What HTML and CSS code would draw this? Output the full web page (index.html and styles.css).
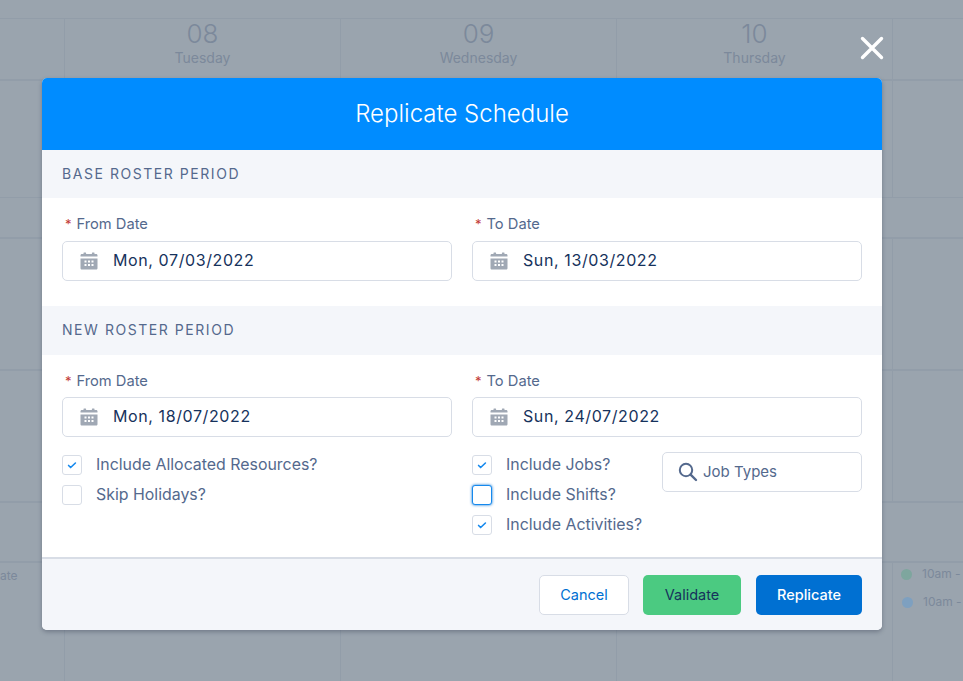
FILE: index.html
```html
<!DOCTYPE html>
<html lang="en">
<head>
<meta charset="utf-8">
<title>Replicate Schedule</title>
<link rel="stylesheet" href="styles.css">
</head>
<body>
<div class="calendar">
  <div class="cal-row cal-top"></div>
  <div class="cal-row cal-head">
    <div class="cell cell-first"></div>
    <div class="cell cell-day"><span class="day-num">08</span><span class="day-name">Tuesday</span></div>
    <div class="cell cell-day"><span class="day-num">09</span><span class="day-name">Wednesday</span></div>
    <div class="cell cell-day"><span class="day-num">10</span><span class="day-name">Thursday</span></div>
    <div class="cell cell-last"></div>
  </div>
  <div class="cal-row cal-r117">
    <div class="cell cell-first"></div><div class="cell cell-day"></div><div class="cell cell-day"></div><div class="cell cell-day"></div><div class="cell cell-last"></div>
  </div>
  <div class="cal-row cal-gap41"></div>
  <div class="cal-row cal-r132">
    <div class="cell cell-first"></div><div class="cell cell-day"></div><div class="cell cell-day"></div><div class="cell cell-day"></div><div class="cell cell-last"></div>
  </div>
  <div class="cal-row cal-r132">
    <div class="cell cell-first"></div><div class="cell cell-day"></div><div class="cell cell-day"></div><div class="cell cell-day"></div><div class="cell cell-last"></div>
  </div>
  <div class="cal-row cal-gap60"></div>
  <div class="cal-row cal-bottom">
    <div class="cell cell-first"><span class="cut-text">ate</span></div>
    <div class="cell cell-day"></div><div class="cell cell-day"></div><div class="cell cell-day"></div>
    <div class="cell cell-last cell-events">
      <div class="event"><span class="dot dot-green"></span><span>10am -</span></div>
      <div class="event event-second"><span class="dot dot-blue"></span><span>10am -</span></div>
    </div>
  </div>
</div>

<button class="close" type="button" aria-label="Close">
  <svg viewBox="0 0 24 24" width="24" height="24"><path d="M2.5 2.5 L21.5 21.5 M21.5 2.5 L2.5 21.5" stroke="#fff" stroke-width="3.4" stroke-linecap="round" fill="none"/></svg>
</button>

<section class="modal">
  <header class="modal-head"><h1>Replicate Schedule</h1></header>
  <div class="modal-body">
    <h2 class="band">Base Roster Period</h2>
    <div class="fields fields-base">
      <div class="field">
        <label class="label"><span class="req">*</span>From Date</label>
        <div class="input">
          <svg class="cal-icon" viewBox="0 0 18 18"><use href="#cal"/></svg>
          <span class="input-text">Mon, 07/03/2022</span>
        </div>
      </div>
      <div class="field">
        <label class="label"><span class="req">*</span>To Date</label>
        <div class="input">
          <svg class="cal-icon" viewBox="0 0 18 18"><use href="#cal"/></svg>
          <span class="input-text">Sun, 13/03/2022</span>
        </div>
      </div>
    </div>
    <h2 class="band band-new">New Roster Period</h2>
    <div class="fields fields-new">
      <div class="field">
        <label class="label"><span class="req">*</span>From Date</label>
        <div class="input">
          <svg class="cal-icon" viewBox="0 0 18 18"><use href="#cal"/></svg>
          <span class="input-text">Mon, 18/07/2022</span>
        </div>
      </div>
      <div class="field">
        <label class="label"><span class="req">*</span>To Date</label>
        <div class="input">
          <svg class="cal-icon" viewBox="0 0 18 18"><use href="#cal"/></svg>
          <span class="input-text">Sun, 24/07/2022</span>
        </div>
      </div>
    </div>
    <div class="options">
      <div class="checks">
        <div class="check"><span class="box"><svg viewBox="0 0 20 20"><use href="#tick"/></svg></span><span class="check-text">Include Allocated Resources?</span></div>
        <div class="check"><span class="box"></span><span class="check-text">Skip Holidays?</span></div>
      </div>
      <div class="options-right">
        <div class="checks">
          <div class="check"><span class="box"><svg viewBox="0 0 20 20"><use href="#tick"/></svg></span><span class="check-text">Include Jobs?</span></div>
          <div class="check"><span class="box box-focus"></span><span class="check-text">Include Shifts?</span></div>
          <div class="check"><span class="box"><svg viewBox="0 0 20 20"><use href="#tick"/></svg></span><span class="check-text">Include Activities?</span></div>
        </div>
        <div class="search">
          <svg class="search-icon" viewBox="0 0 20 20"><circle cx="8" cy="8" r="6.2" fill="none" stroke="#54698d" stroke-width="2"/><path d="M12.6 12.6 L18 18" stroke="#54698d" stroke-width="2.4" stroke-linecap="round"/></svg>
          <span class="search-text">Job Types</span>
        </div>
      </div>
    </div>
  </div>
  <footer class="modal-foot">
    <button class="btn btn-cancel" type="button">Cancel</button>
    <button class="btn btn-validate" type="button">Validate</button>
    <button class="btn btn-replicate" type="button">Replicate</button>
  </footer>
</section>

<svg class="defs" width="0" height="0" aria-hidden="true">
  <symbol id="cal" viewBox="0 0 18 18">
    <path fill="#a0a8b4" fill-rule="evenodd" d="M4 0.5h1.6a.5.5 0 0 1 .5.5v1h5.8V1a.5.5 0 0 1 .5-.5H14a.5.5 0 0 1 .5.5v1h1.7c.7 0 1.3.6 1.3 1.3v1.2H.5V3.3C.5 2.6 1.100 2 1.800 2h1.700V1a.5.5 0 0 1 .5-.5zM.5 6.500h17v9.700c0 .7-.6 1.300-1.300 1.300H1.800c-.7 0-1.300-.6-1.300-1.300zM4.500 8.500v2h2v-2zm3.500 0v2h2v-2zm3.500 0v2h2v-2zM4.500 12v2h2v-2zm3.500 0v2h2v-2zm3.500 0v2h2v-2z"/>
  </symbol>
  <symbol id="tick" viewBox="0 0 20 20">
    <path d="M6.200 10.500 L8.500 12.800 L13.800 7.800" fill="none" stroke="#1589ee" stroke-width="1.800" stroke-linecap="round" stroke-linejoin="round"/>
  </symbol>
</svg>
</body>
</html>
```
FILE: styles.css
```css
* { box-sizing: border-box; }
html, body { margin: 0; height: 100%; }
body {
  position: relative;
  width: 963px;
  height: 681px;
  overflow: hidden;
  background: #9aa4ae;
  font-family: Inter, "Open Sans", sans-serif;
  color: #54698d;
}

/* dimmed calendar behind the modal */
.calendar { display: flex; flex-direction: column; height: 100%; }
.cal-row { display: flex; flex: none; border-bottom: 1px solid #929da9; }
.cal-top { height: 19px; }
.cal-head { height: 62px; border-bottom-width: 2px; }
.cal-r117 { height: 117px; }
.cal-gap41 { height: 41px; border-bottom-width: 2px; }
.cal-r132 { height: 132px; border-bottom-width: 2px; }
.cal-gap60 { height: 60px; border-bottom-width: 2px; }
.cal-bottom { flex: 1; border-bottom: 0; }
.cell { flex: none; }
.cell-first { width: 64px; }
.cell-day { width: 276px; border-left: 1px solid #929da9; display: flex; flex-direction: column; align-items: center; }
.cell-last { flex: 1; border-left: 1px solid #929da9; }
.day-num { font-size: 26px; font-weight: 300; line-height: 30px; color: #7c899b; }
.day-name { font-size: 14px; line-height: 18px; color: #7c899b; }
.cut-text { font-size: 12px; line-height: 16px; color: #7c899b; display: block; margin-top: 5px; }
.cell-events { padding: 3px 0 0 8px; overflow: hidden; }
.event { display: flex; align-items: center; gap: 10px; font-size: 12px; line-height: 16px; color: #7c899b; white-space: nowrap; }
.event-second { margin-top: 12px; margin-left: 1px; }
.dot { width: 11px; height: 11px; border-radius: 50%; flex: none; }
.dot-green { background: #7ea69e; }
.dot-blue { background: #7ea0c0; }

/* close */
.close {
  position: absolute;
  left: 860px;
  top: 36px;
  width: 24px;
  height: 24px;
  padding: 0;
  border: 0;
  background: none;
  line-height: 0;
}

/* modal */
.modal {
  position: absolute;
  left: 42px;
  top: 78px;
  width: 840px;
  height: 552px;
  display: flex;
  flex-direction: column;
  border-radius: 5px;
  overflow: hidden;
  background: #fff;
  box-shadow: 0 2px 4px rgba(40, 50, 70, .35);
}
.modal-head {
  height: 72px;
  flex: none;
  display: flex;
  align-items: center;
  justify-content: center;
  background: #008cff;
}
.modal-head h1 { margin: 0; font-size: 24px; font-weight: 300; color: #fff; line-height: 30px; }
.modal-body { flex: 1; background: #fff; }
.band {
  margin: 0;
  height: 48px;
  padding: 0 20px 2px;
  display: flex;
  align-items: center;
  background: #f4f6fa;
  font-size: 14px;
  font-weight: 400;
  letter-spacing: 1.55px;
  text-transform: uppercase;
  color: #54698d;
}
.band-new { height: 49px; }
.fields { display: grid; grid-template-columns: 390px 390px; column-gap: 20px; padding: 0 20px; }
.fields-base { padding-top: 16px; height: 108px; }
.fields-new { padding-top: 16px; }
.field { display: flex; flex-direction: column; }
.label { display: block; height: 27px; font-size: 14.700px; line-height: 20px; color: #54698d; }
.req { color: #c23934; margin: 0 5px 0 3px; font-size: 13px; }
.fields-new .label { height: 26px; }
.input {
  height: 40px;
  display: flex;
  align-items: center;
  padding-left: 17px;
  gap: 15px;
  border: 1px solid #d8dde6;
  border-radius: 5px;
  background: #fff;
  color: #16325c;
}
.input-text { font-size: 16px; letter-spacing: .6px; margin-bottom: 2px; }
.cal-icon { width: 18px; height: 18px; flex: none; }
.options { display: grid; grid-template-columns: 390px 390px; column-gap: 20px; padding: 15px 20px 0; }
.options-right { display: flex; justify-content: space-between; align-items: flex-start; }
.checks { display: flex; flex-direction: column; gap: 10px; padding-top: 3px; }
.check { display: flex; align-items: center; height: 20px; gap: 14px; color: #54698d; white-space: nowrap; }
.check-text { font-size: 15.900px; margin-bottom: 2px; }
.box {
  width: 20px;
  height: 20px;
  flex: none;
  border: 1px solid #d8dde6;
  border-radius: 3px;
  background: #fff;
  line-height: 0;
}
.box svg { width: 18px; height: 18px; }
.box-focus { border-color: #1589ee; box-shadow: 0 0 3px #0070d2; }
.search {
  width: 200px;
  height: 40px;
  display: flex;
  align-items: center;
  gap: 5px;
  padding-left: 15px;
  border: 1px solid #d8dde6;
  border-radius: 5px;
  color: #54698d;
}
.search-text { font-size: 15px; margin-bottom: 2px; }
.search-icon { width: 20px; height: 20px; flex: none; }
.modal-foot {
  height: 73px;
  flex: none;
  display: flex;
  justify-content: flex-end;
  align-items: flex-start;
  gap: 14px;
  padding: 16px 20px 0;
  border-top: 2px solid #d8dde6;
  background: #f4f6fa;
}
.btn {
  height: 40px;
  padding: 0 0 2px;
  border-radius: 5px;
  font-family: inherit;
  font-size: 14.500px;
  border: 1px solid transparent;
}
.btn-cancel { width: 90px; background: #fff; border-color: #d8dde6; color: #0070d2; }
.btn-validate { width: 98px; background: #4bca81; color: #16325c; }
.btn-replicate { width: 106px; background: #0070d2; color: #fff; margin-left: 1px; font-weight: 500; }
.defs { position: absolute; }
```
